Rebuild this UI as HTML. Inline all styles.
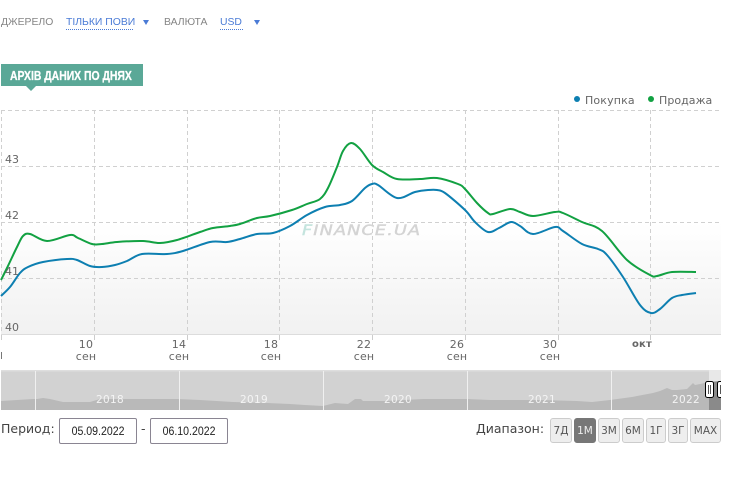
<!DOCTYPE html>
<html><head><meta charset="utf-8"><style>
html,body{margin:0;padding:0;background:#fff;width:729px;height:481px;overflow:hidden}
.a{position:absolute;white-space:nowrap}
.t{font:10.4px "Liberation Sans",sans-serif;color:#858585;top:16px;line-height:13px}
.l{color:#4a7bd6;border-bottom:1px dotted #4a7bd6;height:13px}
.y,.x{font:11px "DejaVu Sans",sans-serif;color:#666;line-height:13px}
.x{transform:translateX(-50%);letter-spacing:.2px}
.yr{top:393px;font:10.5px/15px "DejaVu Sans",sans-serif;color:#f4f4f4;letter-spacing:.3px}
.b{top:418px;height:23px;background:#eee;border:1px solid #ccc;border-radius:3px;font:10.5px/24px "DejaVu Sans",sans-serif;color:#555;text-align:center}
.i{top:418px;height:24px;border:1px solid #8a8592;border-radius:2px;background:#fff;font:12px/25px "Liberation Sans",sans-serif;color:#222;text-align:center;width:76px}
.i span{display:inline-block;transform:scaleX(.88)}
.p{font:12.5px/16px "DejaVu Sans",sans-serif;color:#444}
</style></head><body>
<div class="a t" style="left:1px">ДЖЕРЕЛО</div>
<div class="a t l" style="left:66px;width:67px">ТІЛЬКИ ПОВИ</div>
<div class="a t" style="left:164px">ВАЛЮТА</div>
<div class="a t l" style="left:220px;width:23px">USD</div>
<svg class="a" style="left:0;top:0" width="729" height="100">
<path d="M143 20h6l-3 5zM254 20h6l-3 5z" fill="#4a7bd6"/>
<path d="M1 64h142v22H36l-5 5-5-5H1z" fill="#5aa897"/>
</svg>
<div class="a" style="left:10px;top:68px;font:bold 13px/15px 'Liberation Sans',sans-serif;color:#fff;transform:scaleX(.8);transform-origin:0 0;-webkit-text-stroke:.3px #fff">АРХІВ ДАНИХ ПО ДНЯХ</div>

<svg class="a" style="left:0;top:0" width="729" height="481" id="c">
<defs><linearGradient id="g" x1="0" y1="0" x2="0" y2="1"><stop offset="0" stop-color="#fff"/><stop offset="1" stop-color="#f1f1f1"/></linearGradient></defs>
<rect x="1" y="222" width="720" height="112" fill="url(#g)"/>
<g stroke="#d0d0d0" stroke-width="1" stroke-dasharray="4 3" fill="none">
<path d="M1 110.5H721M1 166.5H721M1 222.5H721M1 278.5H721"/>
<path d="M1.5 110V334M94.5 110V334M187.5 110V334M279.5 110V334M372.5 110V334M465.5 110V334M558.5 110V334M650.5 110V334"/>
</g>
<path d="M1 334.5H721" stroke="#dcdcdc" fill="none"/>
<path d="M1.5 335V340M94.5 335V340M187.5 335V340M279.5 335V340M372.5 335V340M465.5 335V340M558.5 335V340M650.5 335V340" stroke="#ccc" fill="none"/>
<path id="green" fill="none" stroke="#12a142" stroke-width="2" stroke-linejoin="round" d=""/>
<path id="blue" fill="none" stroke="#0d7fb1" stroke-width="2" stroke-linejoin="round" d=""/>
<circle cx="577" cy="99" r="3" fill="#0d7fb1"/><circle cx="651" cy="99" r="3" fill="#12a142"/>
</svg>
<div class="a" style="left:302px;top:223px;font:italic 14px/16px 'DejaVu Sans',sans-serif;color:#d4d4d4;letter-spacing:.9px;-webkit-text-stroke:.4px #d4d4d4;transform:scaleX(1.26);transform-origin:0 0"><span style="color:#c4e4de;-webkit-text-stroke-color:#c4e4de">F</span>INANCE.UA</div>

<div class="a y" style="left:585px;top:94px;font-size:11px;letter-spacing:.15px">Покупка</div>
<div class="a y" style="left:659px;top:94px;font-size:11px;letter-spacing:.05px">Продажа</div>
<div class="a y" style="left:5px;top:153px">43</div>
<div class="a y" style="left:5px;top:209px">42</div>
<div class="a y" style="left:5px;top:265px">41</div>
<div class="a y" style="left:5px;top:321px">40</div>
<div class="a x" style="left:86px;top:338px">10</div><div class="a x" style="left:86px;top:350px">сен</div>
<div class="a x" style="left:179px;top:338px">14</div><div class="a x" style="left:179px;top:350px">сен</div>
<div class="a x" style="left:271px;top:338px">18</div><div class="a x" style="left:271px;top:350px">сен</div>
<div class="a x" style="left:364px;top:338px">22</div><div class="a x" style="left:364px;top:350px">сен</div>
<div class="a x" style="left:457px;top:338px">26</div><div class="a x" style="left:457px;top:350px">сен</div>
<div class="a x" style="left:550px;top:338px">30</div><div class="a x" style="left:550px;top:350px">сен</div>
<div class="a x" style="left:642px;top:338px;font-weight:bold;font-size:10px">окт</div>
<div class="a" style="left:1px;top:352px;width:1px;height:7px;background:#777"></div>

<svg class="a" style="left:0;top:0" width="729" height="481">
<rect x="1" y="370" width="720" height="40" fill="#d2d2d2"/>
<rect x="1" y="370" width="720" height="1.5" fill="#dedede"/>
<path d="M1 401L33 399 37 399 43 398 50 399 63 402 90 402 100 399 127 399 150 399 177 399 200 400 233 402 267 403 290 404 305 405 323 406 335 403 348 404 355 399 361 399 363 401 370 401 385 401 423 399 467 399 490 400 507 400 520 400 540 400 577 401 592 402 610 400 632 397 653 393 660 391 667 388 672 390 677 390 687 389 692 384 693 383 695 385 700 384 709 382V410H1z" fill="#b9b9b9"/>
<path d="M35.5 371V410M179.5 371V410M323.5 371V410M467.5 371V410M611.5 371V410" stroke="#f0f0f0" fill="none"/>
<rect x="709" y="370" width="12" height="40" fill="#e8e8e8"/>
<path d="M709 382L721 381V410H709z" fill="#8a8a8a"/>
<g fill="#fff" stroke="#000"><rect x="705.5" y="381.5" width="8" height="16" rx="2"/><rect x="717.5" y="381.5" width="8" height="16" rx="2"/></g>
<path d="M708.5 385V394M710.5 385V394M720.5 385V394M722.5 385V394" stroke="#555" fill="none"/>
<rect x="721" y="370" width="8" height="40" fill="#fff"/>
</svg>
<div class="a yr" style="left:96px">2018</div>
<div class="a yr" style="left:240px">2019</div>
<div class="a yr" style="left:384px">2020</div>
<div class="a yr" style="left:528px">2021</div>
<div class="a yr" style="left:672px">2022</div>

<div class="a p" style="left:1px;top:421px">Период:</div>
<div class="a i" style="left:59px"><span>05.09.2022</span></div>
<div class="a p" style="left:141px;top:421px">-</div>
<div class="a i" style="left:150px"><span>06.10.2022</span></div>
<div class="a p" style="left:476px;top:421px">Диапазон:</div>
<div class="a b" style="left:550px;width:20px">7Д</div>
<div class="a b" style="left:574px;width:20px;background:#777;border-color:#777;color:#eee">1М</div>
<div class="a b" style="left:598px;width:20px">3М</div>
<div class="a b" style="left:622px;width:20px">6М</div>
<div class="a b" style="left:646px;width:18px">1Г</div>
<div class="a b" style="left:668px;width:18px">3Г</div>
<div class="a b" style="left:690px;width:29px">MAX</div>
<script>
function s(p){var d='M'+p[0]+' '+p[1];for(var i=0;i<p.length-2;i+=2){
var a=i>0?i-2:i,c=i+2,e=i+4<p.length?i+4:c;
d+='C'+(p[i]+(p[c]-p[a])/6).toFixed(1)+' '+(p[i+1]+(p[c+1]-p[a+1])/6).toFixed(1)+' '+(p[c]-(p[e]-p[i])/6).toFixed(1)+' '+(p[c+1]-(p[e+1]-p[i+1])/6).toFixed(1)+' '+p[c]+' '+p[c+1];}
return d}
document.getElementById('blue').setAttribute('d',s([1,296,10,287,20,273,28,267,43,262,67,259,77,260,90,266,102,267,115,265,127,261,142,254,167,254,183,251,210,242,227,242,240,239,257,234,273,233,290,226,307,215,325,207,340,205,352,201,365,188,372,184,378,185,397,198,415,192,428,190,437,190,445,193,465,210,475,222,488,232,499,228,511,222,520,226,533,234,555,227,563,231,582,244,598,249,607,255,623,277,640,305,651,313,660,309,672,298,682,295,696,293]));
document.getElementById('green').setAttribute('d',s([1,280,7,268,17,247,23,236,30,234,47,241,70,235,78,238,92,244,102,244,117,242,143,241,160,243,177,240,200,232,213,228,230,226,240,224,257,218,270,216,292,210,307,204,320,199,328,188,337,167,343,151,351,143,360,149,372,165,383,172,397,179,420,179,437,178,458,184,465,189,477,203,488,213,493,214,510,209,520,212,533,216,555,212,563,213,582,222,602,231,627,260,650,275,657,276,672,272,696,272]));
</script>
</body></html>
